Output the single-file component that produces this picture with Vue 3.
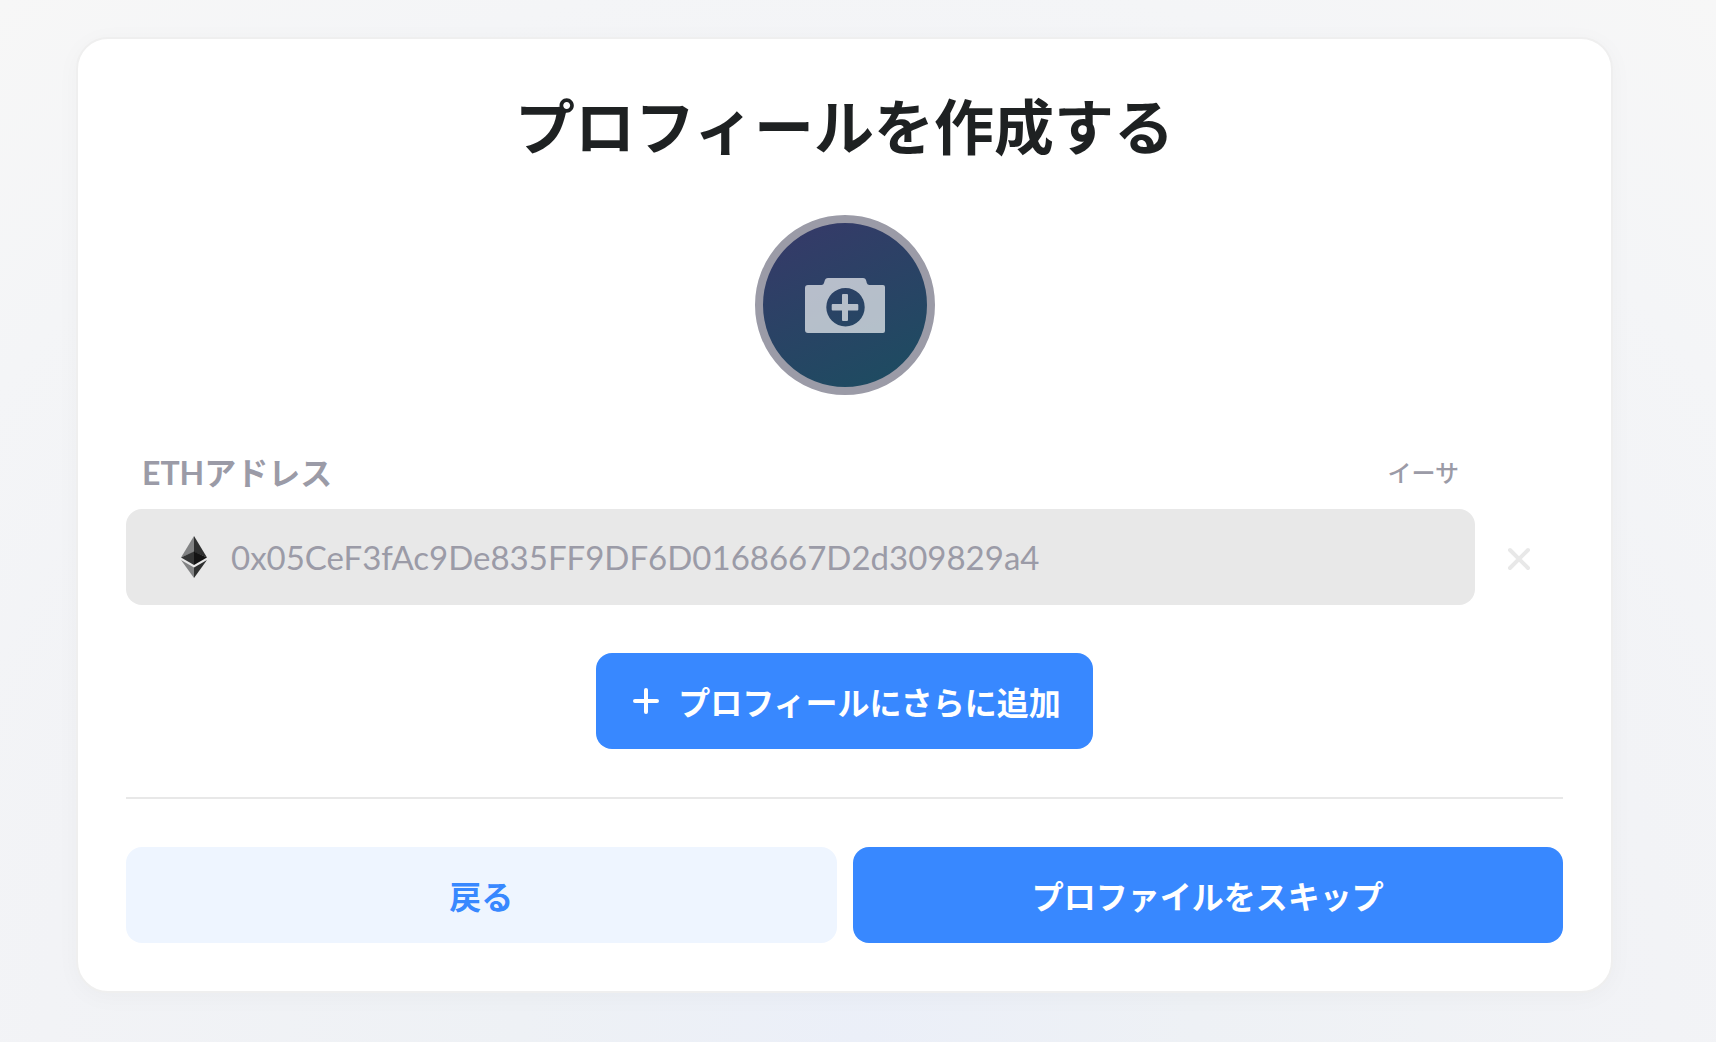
<template>
  <main class="page">
    <form class="card" @submit.prevent>
      <h1 class="title">プロフィールを作成する</h1>

      <button class="avatar" type="button" aria-label="プロフィール画像を追加">
        <svg width="80" height="55" viewBox="0 0 80 55">
          <path
            fill="#fff" fill-opacity="0.66" fill-rule="evenodd"
            d="M3 7H16.5Q18.500 7 19 5L19.600 3Q20.300 0 23 0H58Q60.700 0 61.300 3L61.800 5Q62.300 7 64.500 7H78Q80 7 80 9V53Q80 55 78 55H3Q0 55 0 52V10Q0 7 3 7ZM40.500 10A19.200 19.200 0 1 0 40.500 48.400A19.200 19.200 0 1 0 40.500 10Z"
          />
          <path
            fill="#fff" fill-opacity="0.66"
            d="M38 16H42Q43 16 43 17V26H52.300Q53.300 26 53.300 27V31.500Q53.300 32.500 52.300 32.500H43V42Q43 43 42 43H38Q37 43 37 42V32.500H27.700Q26.700 32.500 26.700 31.500V27Q26.700 26 27.700 26H37V17Q37 16 38 16Z"
          />
        </svg>
      </button>

      <div v-for="campo in campos" :key="campo.id" class="field">
        <div class="field-labels">
          <label :for="campo.id" class="field-label">{{ campo.label }}</label>
          <span class="field-type">{{ campo.tipo }}</span>
        </div>
        <div class="field-row">
          <div class="field-box">
            <svg class="eth" width="26" height="42" viewBox="0 0 26 42">
              <path fill="#828384" d="M13 0L0 21.500L13 16Z" />
              <path fill="#2f3030" d="M13 0L26 21.500L13 16Z" />
              <path fill="#343535" d="M13 15.600L0 21.500L13 29Z" />
              <path fill="#141414" d="M13 15.600L26 21.500L13 29Z" />
              <path fill="#828384" d="M0 24L13 31.500V42Z" />
              <path fill="#2f3030" d="M26 24L13 31.500V42Z" />
            </svg>
            <input :id="campo.id" v-model="campo.valor" class="field-input" type="text" disabled>
          </div>
          <button class="btn-remove" type="button" aria-label="削除" disabled>
            <svg width="24" height="24" viewBox="0 0 24 24">
              <path d="M3 3L21 21M21 3L3 21" stroke="#e8e8e8" stroke-width="4" stroke-linecap="round" />
            </svg>
          </button>
        </div>
      </div>

      <button class="btn btn-primary btn-add" type="button">
        <svg width="36" height="36" viewBox="0 0 36 36">
          <path d="M18 7V29M7 18H29" stroke="#fff" stroke-width="4" stroke-linecap="round" />
        </svg>
        <span>プロフィールにさらに追加</span>
      </button>

      <hr class="divider">

      <div class="actions">
        <button class="btn btn-secondary" type="button">戻る</button>
        <button class="btn btn-primary" type="submit">プロファイルをスキップ</button>
      </div>
    </form>
  </main>
</template>

<script setup>
import { ref } from 'vue';

const campos = ref([
  {
    id: 'eth',
    label: 'ETHアドレス',
    tipo: 'イーサ',
    valor: '0x05CeF3fAc9De835FF9DF6D0168667D2d309829a4'
  }
]);
</script>

<style>
body { margin: 0; }
</style>

<style scoped>
.page {
  box-sizing: border-box;
  min-height: 100vh;
  padding: 37px 103px 48px 76px;
  font-family: Lato, "Noto Sans CJK JP", sans-serif;
  background: radial-gradient(circle at 50% 100%, #ebeff8 0%, #eef1f5 25%, #f2f3f6 60%, #f4f5f7 80%, #f7f7f7 100%);
}
.card { box-sizing: border-box; display: flex; flex-direction: column; align-items: center; gap: 48px; padding: 48px; background: #fff; border: 2px solid #efefef; border-radius: 32px; box-shadow: 0 4px 24px rgba(0, 0, 0, 0.03); }
.title { margin: 0; font-size: 60px; line-height: 80px; font-weight: 700; color: #1e2122; text-align: center; }

.avatar { box-sizing: border-box; display: flex; align-items: center; justify-content: center; width: 180px; height: 180px; padding: 0; border: 8px solid #9b9ba7; border-radius: 50%; background: linear-gradient(155deg, #343b68 15%, #1d4c61 90%) border-box; cursor: pointer; }

.field { align-self: stretch; }
.field-labels { display: flex; align-items: center; justify-content: space-between; height: 60px; margin: 0 88px 6px 0; padding: 0 16px; color: #9b9ba7; }
.field-label { font-size: 32px; line-height: 40px; font-weight: 700; }
.field-type { font-size: 24px; line-height: 32px; font-weight: 500; }
.field-row { display: flex; align-items: center; }
.field-box { box-sizing: border-box; display: flex; flex: 1; align-items: center; gap: 24px; min-width: 0; height: 96px; padding: 0 32px 0 55px; border-radius: 16px; background: #e8e8e8; }
.eth { flex: none; }
.field-input { flex: 1; min-width: 0; height: 48px; padding: 0; border: none; outline: none; background: transparent; font-family: inherit; font-size: 33px; color: #9b9ba7; }
.btn-remove { box-sizing: border-box; display: flex; align-items: center; justify-content: center; width: 88px; height: 96px; padding: 4px 0 0; border: none; background: transparent; }

.btn { display: flex; align-items: center; justify-content: center; height: 96px; padding: 0 32px; border: none; border-radius: 16px; font-family: "Noto Sans CJK JP", sans-serif; font-size: 32px; line-height: 48px; font-weight: 700; cursor: pointer; }
.btn-primary { background: #3888ff; color: #fff; }
.btn-secondary { background: #eef5ff; color: #3888ff; }
.btn-add { gap: 14px; }
.divider { align-self: stretch; height: 2px; margin: 0; border: none; background: #e8e8e8; }
.actions { align-self: stretch; display: grid; grid-template-columns: 1fr 1fr; gap: 16px; }
</style>
